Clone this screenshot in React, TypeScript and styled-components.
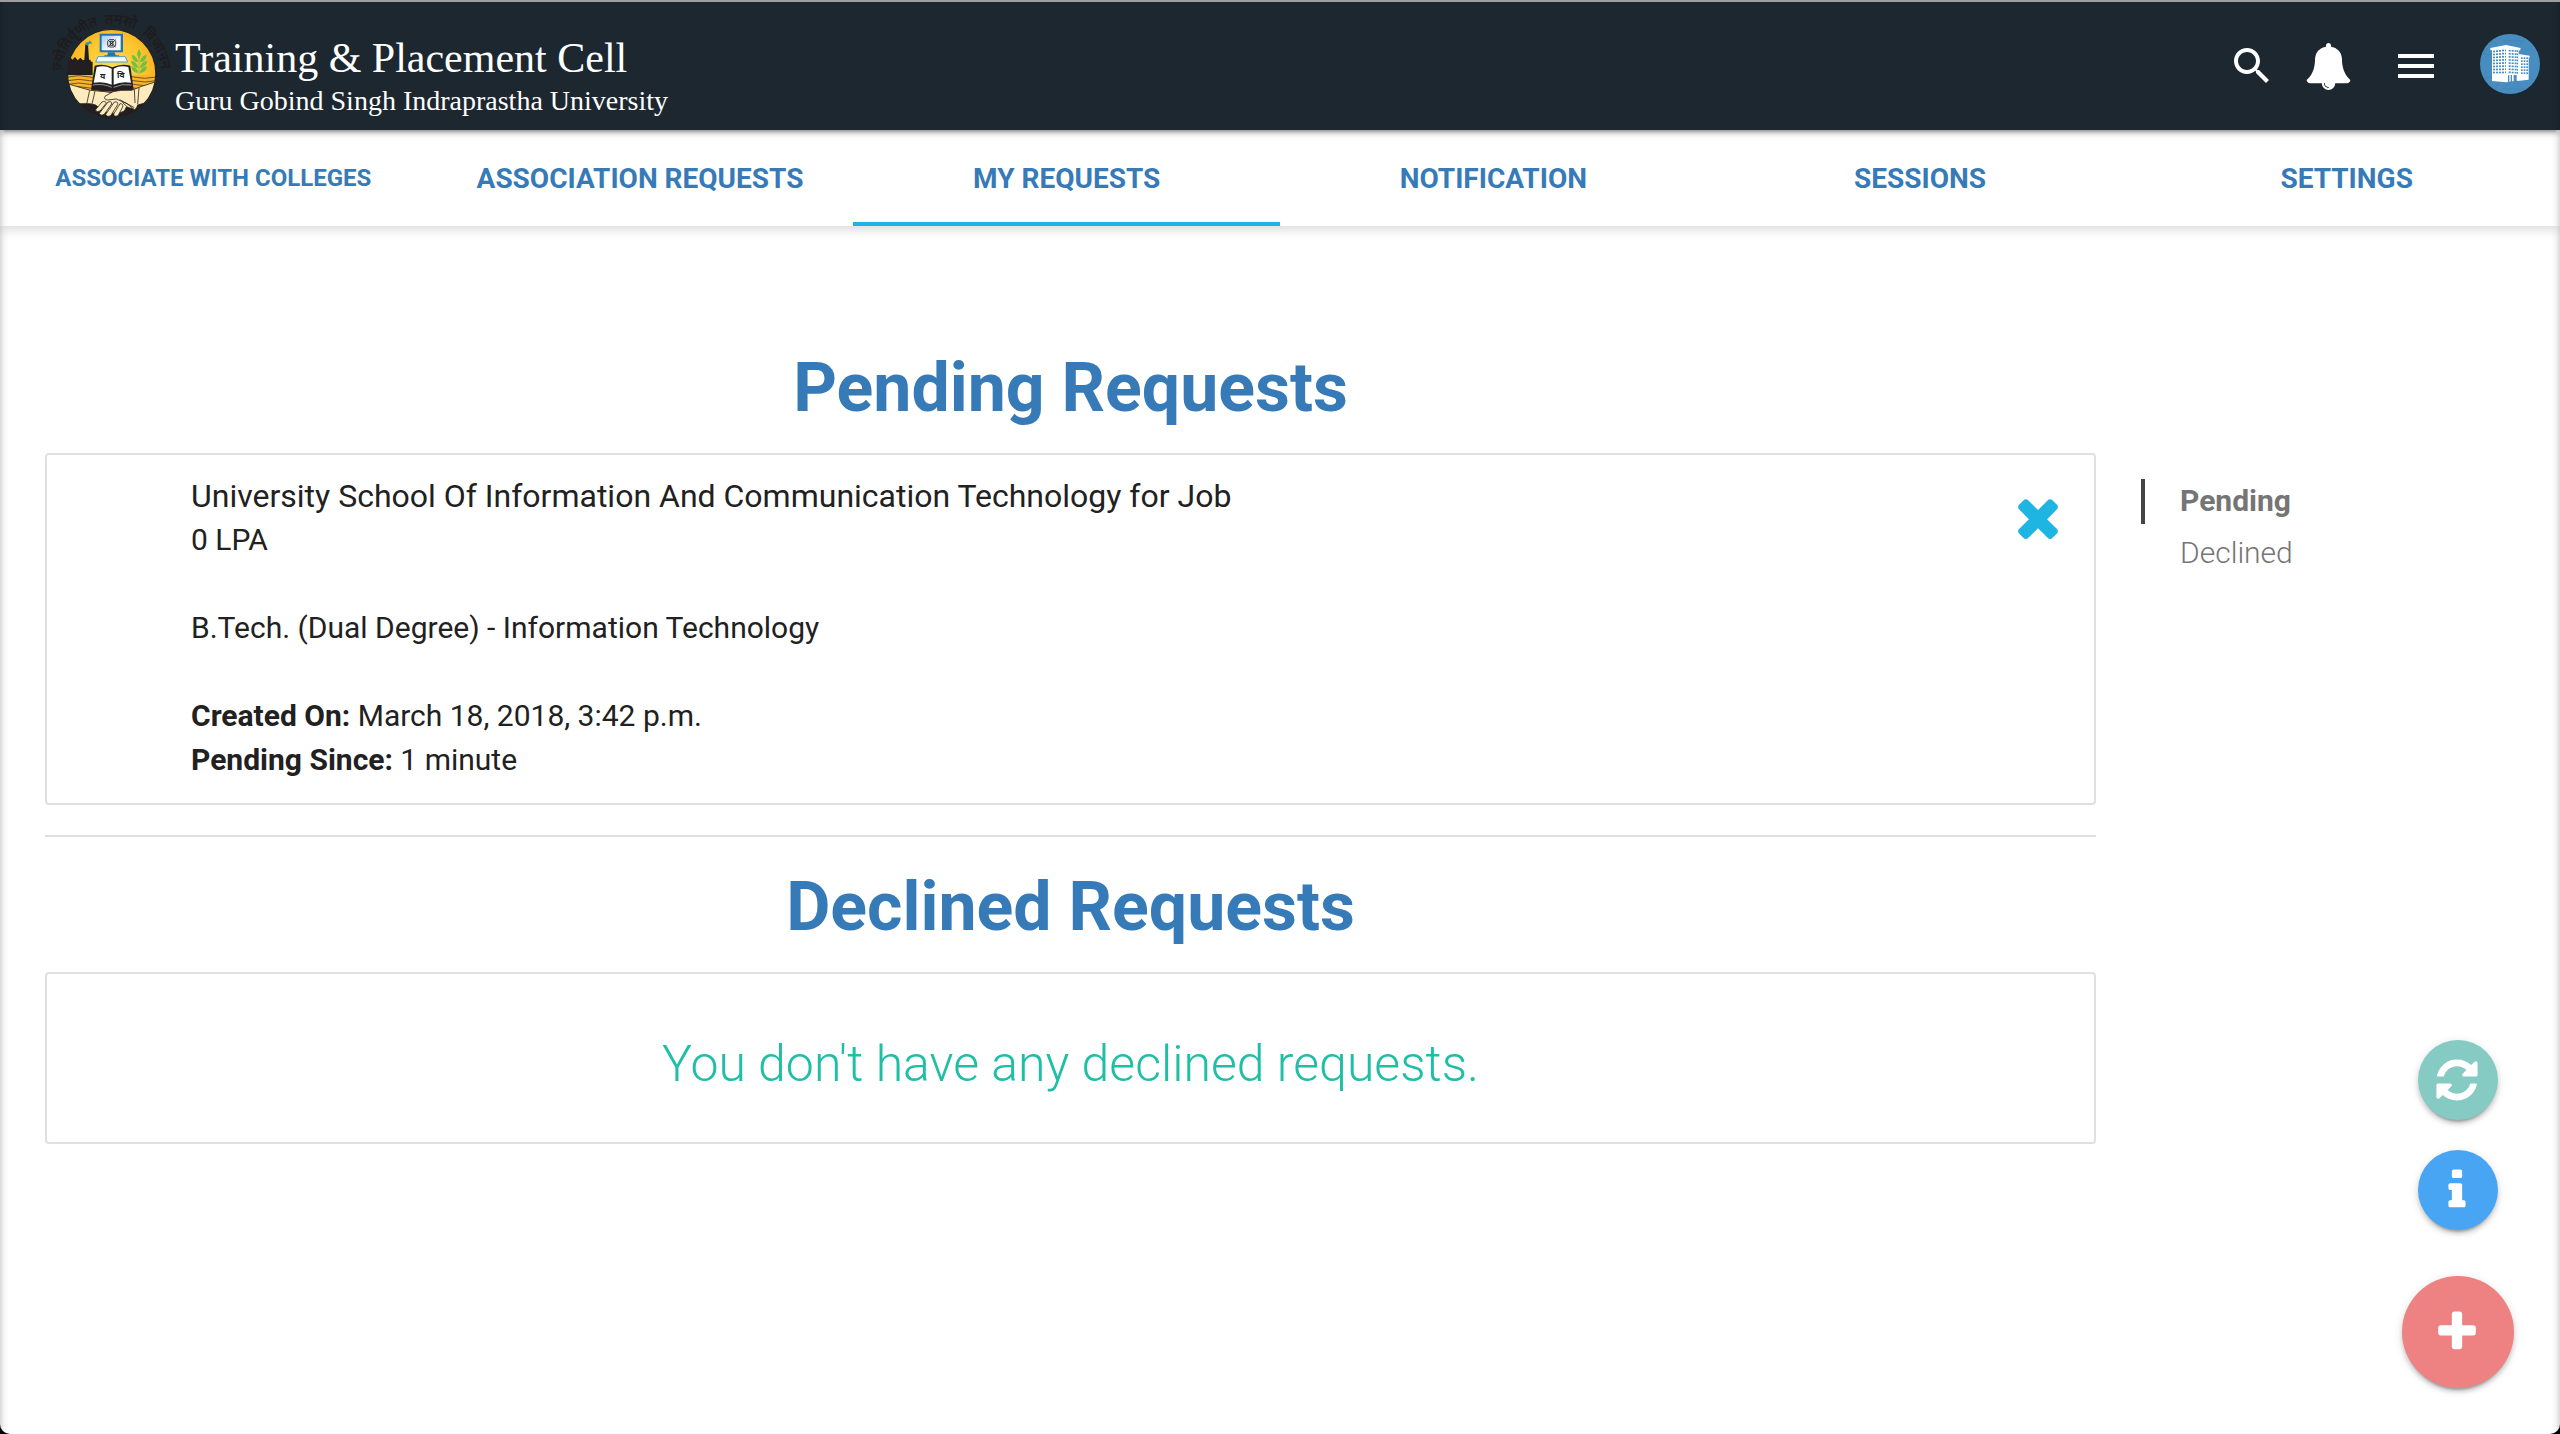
import React from "react";
import styled, { createGlobalStyle, css } from "styled-components";

const GlobalStyle = createGlobalStyle`
  *, *::before, *::after { box-sizing: border-box; }
  html, body { margin: 0; padding: 0; background: #000; }
  body { font-family: Roboto, "Liberation Sans", sans-serif; color: #212121; }
`;

const depth = css`
  box-shadow: 0 4px 4px 0 rgba(0, 0, 0, 0.14), 0 2px 10px 0 rgba(0, 0, 0, 0.12),
    0 6px 2px -4px rgba(0, 0, 0, 0.2);
`;

const Page = styled.div`
  position: relative;
  display: flex;
  flex-direction: column;
  height: 1434px;
  overflow: hidden;
  border-top: 2px solid #a09da2;
  border-radius: 0 0 10px 10px;
  background: #fff;

  &::before,
  &::after {
    content: "";
    position: absolute;
    z-index: 5;
    top: 0;
    bottom: 0;
    width: 9px;
    pointer-events: none;
  }
  &::before {
    left: 0;
    background: linear-gradient(to right, rgba(0, 0, 0, 0.15), rgba(0, 0, 0, 0.04) 45%, transparent);
  }
  &::after {
    right: 0;
    background: linear-gradient(to left, rgba(0, 0, 0, 0.15), rgba(0, 0, 0, 0.04) 45%, transparent);
  }
`;

const Header = styled.header`
  position: relative;
  z-index: 3;
  display: flex;
  flex: none;
  justify-content: space-between;
  height: 128px;
  padding: 0 20px 0 45px;
  background: #1d272f;
  ${depth}
`;

const Brand = styled.div`
  display: flex;
  padding-top: 7px;
  color: #fff;
  font-family: "Liberation Serif", "Times New Roman", serif;
`;

const BrandText = styled.div`
  display: flex;
  flex-direction: column;
  padding-top: 25px;
  white-space: nowrap;
`;

const BrandTitle = styled.span`
  font-size: 42px;
  line-height: 48px;
`;

const BrandSubtitle = styled.span`
  margin-top: 3px;
  font-size: 28px;
  line-height: 32px;
`;

const Actions = styled.div`
  display: flex;
  align-items: center;
  height: 128px;
`;

const Action = styled.button<{ $gap: number }>`
  display: flex;
  margin: 0 ${(p) => p.$gap}px 0 0;
  padding: 0;
  border: 0;
  background: none;
  color: #fff;

  &:last-child {
    margin-bottom: 4px;
  }
`;

const Nav = styled.nav`
  position: relative;
  z-index: 2;
  display: grid;
  flex: none;
  grid-template-columns: repeat(6, 1fr);
  height: 96px;
  background: #fff;
  box-shadow: 0 4px 10px rgba(0, 0, 0, 0.14);
`;

const Tab = styled.a<{ $active?: boolean; $small?: boolean }>`
  height: 96px;
  border-bottom: 4px solid ${(p) => (p.$active ? "#1fb5e2" : "transparent")};
  color: #367bb7;
  font-size: ${(p) => (p.$small ? 24 : 28)}px;
  font-weight: 700;
  line-height: ${(p) => (p.$small ? 96 : 97)}px;
  text-align: center;
  white-space: nowrap;
`;

const Content = styled.main`
  display: flex;
  padding: 124px 0 0 45px;
`;

const Column = styled.div`
  width: 2051px;
`;

const Heading = styled.h4`
  margin: 0 0 26px;
  color: #367bb7;
  font-size: 68px;
  font-weight: 700;
  line-height: 77px;
  text-align: center;
`;

const Card = styled.section`
  display: flex;
  justify-content: space-between;
  height: 352px;
  padding: 19px 36px 0 144px;
  border: 2px solid #e0e0e0;
  border-radius: 4px;
`;

const Details = styled.div`
  display: flex;
  flex-direction: column;
`;

const Line = styled.p<{ $large?: boolean; $spaced?: boolean }>`
  margin: ${(p) => (p.$spaced ? 44 : 0)}px 0 0;
  font-size: ${(p) => (p.$large ? 32 : 30)}px;
  line-height: 44px;
  white-space: nowrap;
`;

const RemoveButton = styled.button`
  display: flex;
  align-self: flex-start;
  margin: 13px -10px 0 0;
  padding: 0;
  border: 0;
  background: none;
  color: #1fb5e2;
`;

const Divider = styled.hr`
  height: 2px;
  margin: 30px 0 32px;
  border: 0;
  background: #e0e0e0;
`;

const EmptyCard = styled.section`
  display: flex;
  align-items: center;
  justify-content: center;
  height: 172px;
  padding-top: 12px;
  border: 2px solid #e0e0e0;
  border-radius: 4px;
  color: #1fbfa5;
  font-size: 50px;
  font-weight: 300;
`;

const Contents = styled.aside`
  display: flex;
  flex-direction: column;
  gap: 7px;
  margin-left: 45px;
  padding-top: 129px;
`;

const ContentsLink = styled.a<{ $active?: boolean }>`
  height: 45px;
  padding-left: 35px;
  border-left: 4px solid ${(p) => (p.$active ? "#444" : "transparent")};
  color: #757575;
  font-size: 30px;
  font-weight: ${(p) => (p.$active ? 700 : 300)};
  line-height: 43px;
`;

const FloatingActions = styled.div`
  position: absolute;
  right: 46px;
  bottom: 46px;
  display: flex;
  flex-direction: column;
  align-items: center;
`;

const FloatingButton = styled.button<{ $size: number; $color: string; $gap: number }>`
  display: flex;
  align-items: center;
  justify-content: center;
  width: ${(p) => p.$size}px;
  height: ${(p) => p.$size}px;
  margin: 0 0 ${(p) => p.$gap}px;
  padding: 0 2px 0 0;
  border: 0;
  border-radius: 50%;
  background: ${(p) => p.$color};
  color: #fff;
  ${depth}
`;

const glyphs = {
  bell: "M912 1696q0-16-16-16-59 0-101.5-42.5t-42.5-101.5q0-16-16-16t-16 16q0 73 51.5 124.5t124.5 51.5q16 0 16-16zm816-288q0 52-38 90t-90 38h-448q0 106-75 181t-181 75-181-75-75-181h-448q-52 0-90-38t-38-90q50-42 91-88t85-119.5 74.5-158.5 50-206 19.5-260q0-152 117-282.5t307-158.5q-8-19-8-39 0-40 28-68t68-28 68 28 28 68q0 20-8 39 190 28 307 158.5t117 282.5q0 139 19.5 260t50 206 74.5 158.5 85 119.5 91 88z",
  refresh:
    "M1639 1056q0 5-1 7-64 268-268 434.5t-478 166.5q-146 0-282.5-55t-243.5-157l-129 129q-19 19-45 19t-45-19-19-45v-448q0-26 19-45t45-19h448q26 0 45 19t19 45-19 45l-137 137q71 66 161 102t187 36q134 0 250-65t186-179q11-17 53-117 8-23 30-23h192q13 0 22.5 9.5t9.5 22.5zm25-800v448q0 26-19 45t-45 19h-448q-26 0-45-19t-19-45 19-45l138-138q-148-137-349-137-134 0-250 65t-186 179q-11 17-53 117-8 23-30 23h-199q-13 0-22.5-9.5t-9.5-22.5v-7q65-268 270-434.5t480-166.5q146 0 284 55.5t245 156.5l130-129q19-19 45-19t45 19 19 45z",
  info: "M1216 1344v128q0 26-19 45t-45 19h-512q-26 0-45-19t-19-45v-128q0-26 19-45t45-19h64v-384h-64q-26 0-45-19t-19-45v-128q0-26 19-45t45-19h384q26 0 45 19t19 45v576h64q26 0 45 19t19 45zm-128-1152v192q0 26-19 45t-45 19h-256q-26 0-45-19t-19-45v-192q0-26 19-45t45-19h256q26 0 45 19t19 45z",
  plus: "M1600 736v192q0 40-28 68t-68 28h-416v416q0 40-28 68t-68 28h-192q-40 0-68-28t-28-68v-416h-416q-40 0-68-28t-28-68v-192q0-40 28-68t68-28h416v-416q0-40 28-68t68-28h192q40 0 68 28t28 68v416h416q40 0 68 28t28 68z",
  times:
    "M1490 1322q0 40-28 68l-136 136q-28 28-68 28t-68-28l-294-294-294 294q-28 28-68 28t-68-28l-136-136q-28-28-28-68t28-68l294-294-294-294q-28-28-28-68t28-68l136-136q28-28 68-28t68 28l294 294 294-294q28-28 68-28t68 28l136 136q28 28 28 68t-28 68l-294 294 294 294q28 28 28 68z",
};

const Glyph = ({ name, size }: { name: keyof typeof glyphs; size: number }) => (
  <svg width={size} height={size} viewBox="0 0 1792 1792" fill="currentColor">
    <path d={glyphs[name]} />
  </svg>
);

const Logo = () => (
  <svg width="130" height="113" viewBox="44 24 390 339">
    <defs>
      <radialGradient id="sky" cx="50%" cy="45%" r="55%">
        <stop offset="0" stopColor="#ffdf55" />
        <stop offset="0.6" stopColor="#fdc72f" />
        <stop offset="1" stopColor="#f6ac1e" />
      </radialGradient>
      <linearGradient id="screen" x1="0" y1="0" x2="1" y2="1">
        <stop offset="0" stopColor="#9fcbe9" />
        <stop offset="0.6" stopColor="#f3f9fd" />
      </linearGradient>
      <clipPath id="disc">
        <circle cx="244" cy="218" r="133" />
      </clipPath>
      <path id="ring" d="M94 218a150 150 0 0 1 300 0" />
    </defs>
    <g
      fill="#1f1b1e"
      stroke="#1f1b1e"
      strokeWidth="0.8"
      fontFamily="'Noto Sans', sans-serif"
      fontSize="42"
      fontWeight="500"
    >
      <text>
        <textPath href="#ring" startOffset="8">ज्योतिर्वृणीत</textPath>
      </text>
      <text>
        <textPath href="#ring" startOffset="216">तमसो</textPath>
      </text>
      <text>
        <textPath href="#ring" startOffset="332">विजानन</textPath>
      </text>
    </g>
    <g clipPath="url(#disc)">
      <rect x="110" y="84" width="270" height="270" fill="url(#sky)" />
      <path d="M110 222h270v52H110z" fill="#f9b428" />
      <path
        d="M112 228q34-8 66 0t66 0 66 0 68 0M112 239q34-8 66 0t66 0 66 0 68 0M112 250q34-8 66 0t66 0 66 0 68 0M112 261q34-8 66 0t66 0 66 0 68 0"
        fill="none"
        stroke="#5e4420"
        strokeWidth="2.6"
      />
      <path d="M110 222v-54l8-2 8 10 8-8 8 10 8-8 8 8 4-2 3-46h8l3 46h4l2 6h5v40z" fill="#231f20" />
      <path d="M166 130q-3-6 4-6t6-4 6 2-2 6-5 2-4 4z" fill="#2f9ba0" />
      <path d="M208 98h70v56h-70z" fill="#1d75b9" />
      <path d="M214 104h57v44h-57z" fill="url(#screen)" />
      <path d="M233 154h20l3 9h10v6h-44v-6h9z" fill="#1d75b9" />
      <path d="M203 167h82l7 16h-96z" fill="#f2f9ff" stroke="#4f9bd2" strokeWidth="3" />
      <path
        d="M237 116h14l5 5v12l-5 5h-14l-5-5v-12zM240 121h8v12h-8zM232 116l24 22M256 116l-24 22"
        fill="none"
        stroke="#231f20"
        strokeWidth="2.6"
      />
      <path
        d="M326 221v-50M326 146q9 12 0 26-9-14 0-26zM305 163q15 3 17 20-16-3-17-20zM348 163q-16 3-18 20 17-3 18-20zM303 180q17 3 19 20-17-3-19-20zM350 180q-18 3-20 20 18-3 20-20zM304 197q16 2 19 18-17-2-19-18zM349 197q-17 2-20 18 18-2 20-18z"
        fill="#6fc043"
        stroke="#6fc043"
        strokeWidth="2"
      />
      <path d="M193 194q28-7 53 5 26-12 54-5l10 72q-34 6-62 6-30 0-66-6z" fill="#231f20" />
      <path d="M199 198q26-6 45 5v48q-22-11-54-6z" fill="#fff" />
      <path d="M294 198q-25-6-44 5v48q22-11 52-6z" fill="#fff" />
      <path d="M188 252q32-5 56 7M304 252q-30-5-54 7" fill="none" stroke="#fff" strokeWidth="1.6" />
      <g fill="#231f20" fontFamily="'Noto Sans', sans-serif" fontSize="25" fontWeight="700">
        <text x="209" y="234">य</text>
        <text x="260" y="230">वि</text>
      </g>
      <path d="M105 290h280v70H105z" fill="#231f20" />
      <g fill="#fdebbd" stroke="#231f20" strokeWidth="2.4" strokeLinejoin="round">
        <path d="M110 248l70 20 44 4 26 4 24 8 34 22 8 10-6 8-22-6-6 12-20 8-40-4-16-14-10-8-18-4-40 0-36-30z" />
        <path d="M384 240l-50 16-30 12-32 0-24 4-24 14q-5 9 8 11l26-3 32 14 22 18 6-4 4-10 50-14 24-40z" />
        <path d="M215 303q10-5 13 3l-19 24q-9 5-14-3zM233 303q12-4 11 6l-22 31q-12 6-15-3zM252 303q13-2 10 8l-21 33q-13 5-15-4zM269 308q11 0 8 10l-14 26q-13 5-13-5z" />
        <path d="M268 296l44 24M276 304l26 24" fill="none" />
        <path d="M178 268l-10 46M194 270l-10 44M312 266l2 40M326 260l-4 50" fill="none" />
      </g>
    </g>
    <circle cx="244" cy="218" r="132.5" fill="none" stroke="#231f20" strokeWidth="3.5" />
  </svg>
);

const SearchIcon = () => (
  <svg width="48" height="48" viewBox="0 0 24 24" fill="currentColor">
    <path d="M15.5 14h-.79l-.28-.27C15.41 12.59 16 11.11 16 9.5 16 5.91 13.09 3 9.5 3S3 5.91 3 9.5 5.91 16 9.5 16c1.61 0 3.09-.59 4.23-1.57l.27.28v.79l5 4.99L20.49 19l-4.99-5zm-6 0C7.01 14 5 11.99 5 9.5S7.01 5 9.5 5 14 7.01 14 9.5 11.99 14 9.5 14z" />
  </svg>
);

const MenuIcon = () => (
  <svg width="48" height="48" viewBox="0 0 24 24" fill="currentColor">
    <path d="M3 18h18v-2H3v2zm0-5h18v-2H3v2zm0-7v2h18V6H3z" />
  </svg>
);

const floors = [0, 1, 2, 3, 4, 5, 6, 7];

const Avatar = () => (
  <svg width="60" height="60" viewBox="0 0 180 180">
    <defs>
      <clipPath id="avatar">
        <circle cx="90" cy="90" r="90" />
      </clipPath>
    </defs>
    <g clipPath="url(#avatar)">
      <rect width="180" height="180" fill="#488dc0" />
      <path
        d="M10 60l30-40 30 40zM70 20l30 40 30-40zM130 60l30-30M10 130l30 40 30-40zM70 165l30-30 30 30zM130 120l35 20"
        fill="none"
        stroke="#3f83b7"
        strokeWidth="2"
      />
    </g>
    <g fill="#fff">
      <path d="M31 42l47-9 44 9-2 8-4-1v90l-36 6-44-4V49l-5-1z" />
      <path d="M116 60l33 5v5l-3 1v66l-34 4z" />
    </g>
    <g fill="#488dc0">
      {floors.map((r) => (
        <g key={r}>
          {[39, 48, 57, 66].map((x, i) => (
            <rect key={x} x={x} y={50 + r * 9 - i * (1 - r / 7)} width="6" height="5" />
          ))}
          {[75, 86, 95, 104, 111].map((x, i) => (
            <rect key={x} x={x} y={47 + r * 9.3 + i * 0.5} width={i === 0 || i === 4 ? 3 : 6} height="5" />
          ))}
          {r > 1 && [123, 131, 139].map((x) => <rect key={x} x={x} y={52 + r * 9} width="5" height="5" />)}
        </g>
      ))}
      <path d="M84 124h4v20l-4 1zM92 123h4v21h-4zM101 123h9v18l-9 2z" />
    </g>
  </svg>
);

const tabs = [
  { label: "ASSOCIATE WITH COLLEGES", small: true },
  { label: "ASSOCIATION REQUESTS" },
  { label: "MY REQUESTS", active: true },
  { label: "NOTIFICATION" },
  { label: "SESSIONS" },
  { label: "SETTINGS" },
];

export default function App() {
  return (
    <>
      <GlobalStyle />
      <Page>
        <Header>
          <Brand>
            <Logo />
            <BrandText>
              <BrandTitle>Training &amp; Placement Cell</BrandTitle>
              <BrandSubtitle>Guru Gobind Singh Indraprastha University</BrandSubtitle>
            </BrandText>
          </Brand>
          <Actions>
            <Action $gap={29} aria-label="Search">
              <SearchIcon />
            </Action>
            <Action $gap={40} aria-label="Notifications">
              <Glyph name="bell" size={47} />
            </Action>
            <Action $gap={40} aria-label="Menu">
              <MenuIcon />
            </Action>
            <Action $gap={0} aria-label="Account">
              <Avatar />
            </Action>
          </Actions>
        </Header>
        <Nav>
          {tabs.map((t) => (
            <Tab key={t.label} $active={t.active} $small={t.small}>
              {t.label}
            </Tab>
          ))}
        </Nav>
        <Content>
          <Column>
            <Heading>Pending Requests</Heading>
            <Card>
              <Details>
                <Line $large>University School Of Information And Communication Technology for Job</Line>
                <Line>0 LPA</Line>
                <Line $spaced>B.Tech. (Dual Degree) - Information Technology</Line>
                <Line $spaced>
                  <b>Created On:</b> March 18, 2018, 3:42 p.m.
                </Line>
                <Line>
                  <b>Pending Since:</b> 1 minute
                </Line>
              </Details>
              <RemoveButton aria-label="Remove request">
                <Glyph name="times" size={60} />
              </RemoveButton>
            </Card>
            <Divider />
            <Heading>Declined Requests</Heading>
            <EmptyCard>You don't have any declined requests.</EmptyCard>
          </Column>
          <Contents>
            <ContentsLink $active>Pending</ContentsLink>
            <ContentsLink>Declined</ContentsLink>
          </Contents>
        </Content>
        <FloatingActions>
          <FloatingButton $size={80} $color="#85cbc4" $gap={30} aria-label="Refresh">
            <Glyph name="refresh" size={48} />
          </FloatingButton>
          <FloatingButton $size={80} $color="#47a5f3" $gap={46} aria-label="Information">
            <Glyph name="info" size={48} />
          </FloatingButton>
          <FloatingButton $size={112} $color="#ee8283" $gap={0} aria-label="Add">
            <Glyph name="plus" size={48} />
          </FloatingButton>
        </FloatingActions>
      </Page>
    </>
  );
}
